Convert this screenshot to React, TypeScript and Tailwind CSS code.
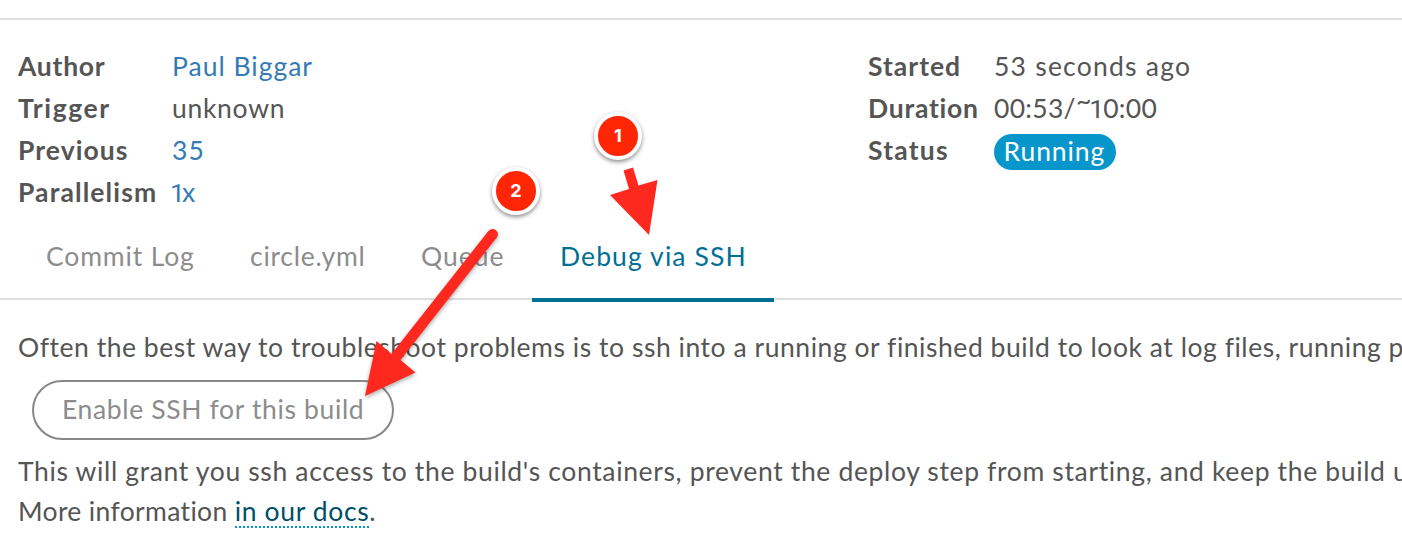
import type { ReactNode } from "react";

function Row({ label, labelWidth, tracking, children }: { label: string; labelWidth: string; tracking: string; children: ReactNode }) {
  return (
    <div className="flex h-[42px] items-center">
      <dt className={`${labelWidth} ${tracking} shrink-0 font-bold`}>{label}</dt>
      <dd>{children}</dd>
    </div>
  );
}

function Step({ n, place }: { n: string; place: string }) {
  return (
    <div
      className={`absolute ${place} flex size-12 items-center justify-center rounded-full border-4 border-white bg-[#ff2605] font-['Inter',sans-serif] text-lg font-bold text-white shadow-[0_2px_4px_rgba(0,0,0,0.45)]`}
    >
      {n}
    </div>
  );
}

/** The numeral one, without a foot serif. */
function One({ tracking }: { tracking: string }) {
  return <span className={`font-['Roboto',sans-serif] font-normal ${tracking}`}>1</span>;
}

export default function App() {
  return (
    <div className="relative h-[541px] w-[1402px] overflow-hidden bg-white font-['Lato',sans-serif] text-[26.5px] leading-[40px] whitespace-nowrap text-[#555]">
      <div className="mt-[18px] h-[2px] bg-[#ddd]" />

      <div className="flex pt-[25px] pl-[18px]">
        <dl className="w-[850px]">
          <Row label="Author" labelWidth="w-[154px]" tracking="tracking-[0.75px]">
            <a className="tracking-[1px] text-[#337ab7]">Paul Biggar</a>
          </Row>
          <Row label="Trigger" labelWidth="w-[154px]" tracking="tracking-[1.6px]">
            <span className="tracking-[0.7px]">unknown</span>
          </Row>
          <Row label="Previous" labelWidth="w-[154px]" tracking="tracking-[1.05px]">
            <a className="tracking-[1.2px] text-[#337ab7]">35</a>
          </Row>
          <Row label="Parallelism" labelWidth="w-[154px]" tracking="tracking-[1.1px]">
            <a className="text-[#337ab7]">
              <One tracking="-ml-[2px] tracking-[-3px]" />x
            </a>
          </Row>
        </dl>
        <dl>
          <Row label="Started" labelWidth="w-[126px]" tracking="tracking-[1px]">
            <span className="tracking-[1.22px]">53 seconds ago</span>
          </Row>
          <Row label="Duration" labelWidth="w-[126px]" tracking="tracking-[0.75px]">
            <span className="tracking-[0.3px]">
              00:53/<span className="relative -top-[8px] tracking-[-2px]">~</span>
              <One tracking="tracking-[-1px]" />
              0:00
            </span>
          </Row>
          <Row label="Status" labelWidth="w-[126px]" tracking="tracking-[1.2px]">
            <span className="mt-[4px] flex h-9 w-[122px] items-center rounded-full bg-[#0796cb] pb-[3px] pl-[9.5px] tracking-[0.9px] text-white">
              Running
            </span>
          </Row>
        </dl>
      </div>

      <nav className="flex h-[87px] border-b-2 border-[#ddd] pt-[23px] text-[#8c8c8c]">
        <a className="w-[222px] pl-[46px] tracking-[0.85px]">Commit Log</a>
        <a className="w-[170px] pl-[28px] tracking-[0.75px]">circle.yml</a>
        <a className="w-[140px] pl-[29px] tracking-[1px]">Queue</a>
        <a className="h-[66px] w-[242px] border-b-4 border-[#027095] pl-[28px] tracking-[1.1px] text-[#027095]">Debug via SSH</a>
      </nav>

      <main className="pt-[27px] pl-[18px]">
        <p className="tracking-[0.54px]">Often the best way to troubleshoot problems is to ssh into a running or finished build to look at log files, running processes</p>
        <button className="mt-[13px] ml-[14px] flex h-[60px] w-[362px] items-center rounded-full border-2 border-[#888] pb-[3px] pl-[28px] tracking-[0.64px] text-[#8c8c8c]">
          Enable SSH for this build
        </button>
        <p className="mt-[11px] tracking-[0.65px]">This will grant you ssh access to the build's containers, prevent the deploy step from starting, and keep the build up</p>
        <p className="tracking-[0.35px]">
          More information{" "}
          <span className="relative inline-block tracking-[0.63px] text-[#004f69]">
            in our docs
            <span className="absolute bottom-[3px] left-0 w-full border-b-2 border-dotted border-[#0796cb]" />
          </span>
          .
        </p>
      </main>

      <svg className="absolute inset-0 h-[541px] w-[1402px]" fill="#ff281e">
        <path d="M623.500 170.500L633 167.500L638.500 185.500L657.500 180L649 235L610 195L629 189Z" />
        <g className="drop-shadow-[0_2px_2px_rgba(0,0,0,0.35)]">
          <path d="M488 231.500Q491 228 495 229.500Q499 232 497.500 236.500L400.500 360L415.500 372.500L365 396L376.500 341L391.500 354Z" />
        </g>
      </svg>
      <Step n="1" place="top-[112px] left-[594px]" />
      <Step n="2" place="top-[167px] left-[492px]" />
    </div>
  );
}
